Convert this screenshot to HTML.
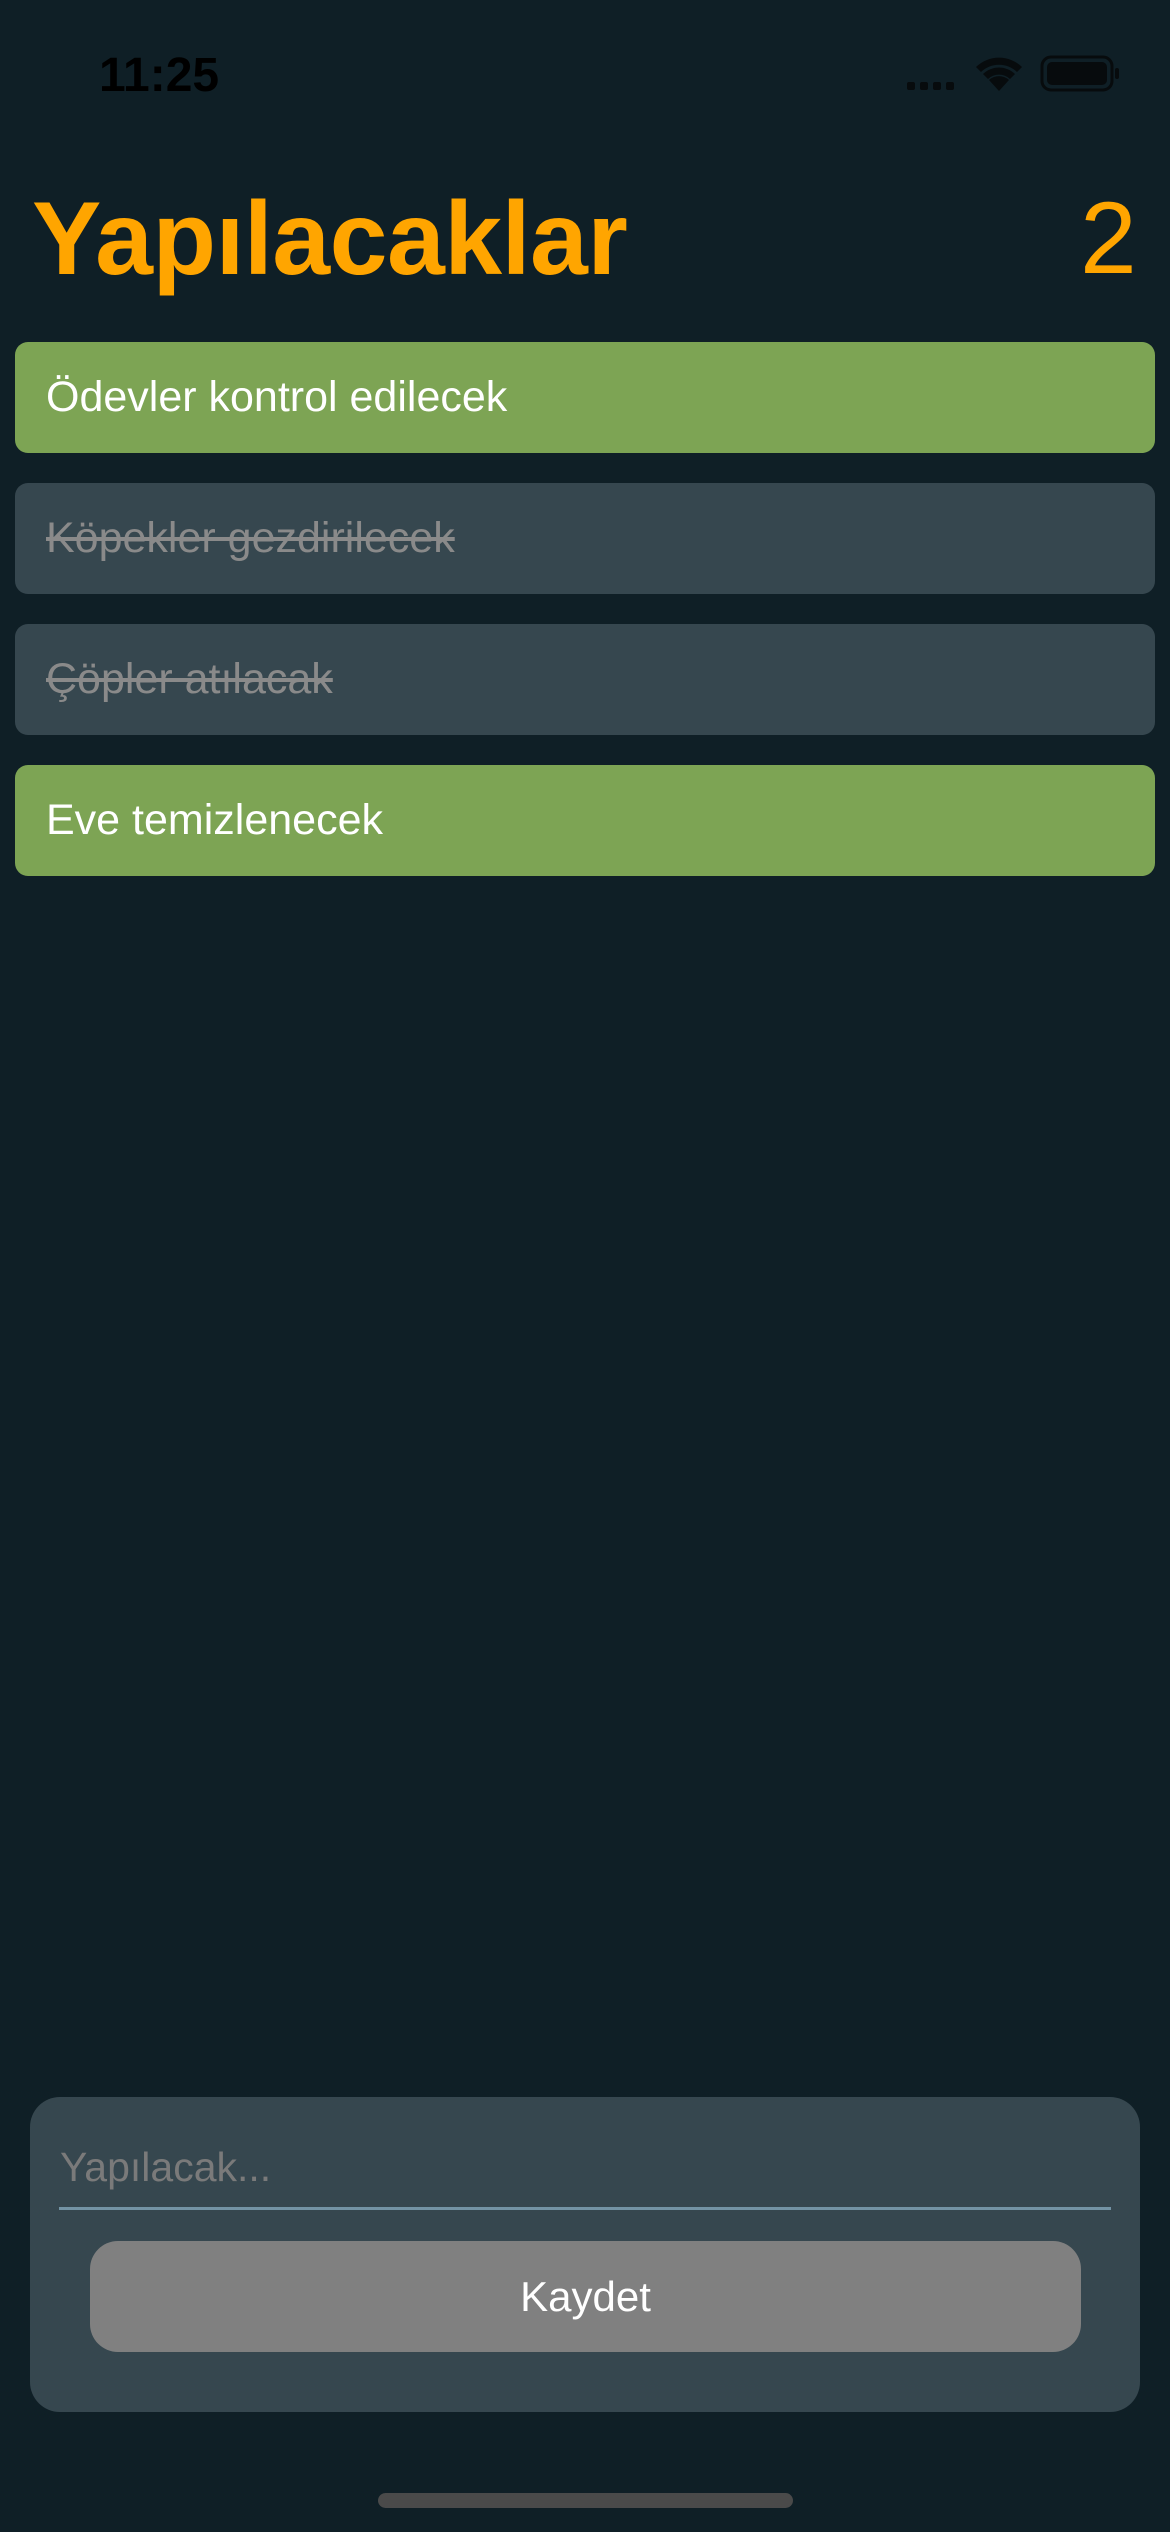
<!DOCTYPE html>
<html><head><meta charset="utf-8"><style>
body{margin:0;width:1170px;height:2532px;background:#0f1f26;position:relative;overflow:hidden;font-family:"Liberation Sans",sans-serif}
.a{position:absolute}
.card{position:absolute;left:15px;width:1140px;height:111px;border-radius:13px;box-sizing:border-box;padding-left:31px;line-height:111px;font-size:43px;color:#fff}
.g{background:#7da454}
.d{background:#36474f;color:#8a8a8a;text-decoration:line-through}
</style></head><body>
<div class="a" style="left:99px;top:48px;font-size:48px;font-weight:bold;color:#000;letter-spacing:0px">11:25</div>
<svg class="a" style="left:905px;top:54px" width="215" height="40" viewBox="0 0 215 40">
<g fill="#070b0d"><rect x="2" y="28" width="8" height="8" rx="2"/><rect x="15" y="28" width="8" height="8" rx="2"/><rect x="28" y="28" width="8" height="8" rx="2"/><rect x="41" y="28" width="8" height="8" rx="2"/>
<path d="M94 37 L84 26 A15 15 0 0 1 104 26 Z"/>
<path d="M78 20 A23 23 0 0 1 110 20 L105 25 A16 16 0 0 0 83 25 Z"/>
<path d="M71 13 A33 33 0 0 1 117 13 L112 18 A26 26 0 0 0 76 18 Z"/>
<rect x="137" y="3" width="70" height="33" rx="9" fill="none" stroke="#070b0d" stroke-width="3"/>
<rect x="142" y="8" width="60" height="23" rx="5"/><rect x="210" y="14" width="4" height="11" rx="2"/></g></svg>
<div class="a" style="left:32px;top:180px;font-size:104px;font-weight:bold;color:#ffa500;letter-spacing:-0.5px">Yapılacaklar</div>
<div class="a" style="left:1080px;top:180px;font-size:102px;color:#ffa500">2</div>
<div class="card g" style="top:342px">Ödevler kontrol edilecek</div>
<div class="card d" style="top:483px">Köpekler gezdirilecek</div>
<div class="card d" style="top:624px">Çöpler atılacak</div>
<div class="card g" style="top:765px">Eve temizlenecek</div>
<div class="a" style="left:30px;top:2097px;width:1110px;height:315px;background:#36474f;border-radius:30px"></div>
<div class="a" style="left:60px;top:2144px;font-size:41px;color:#7a7a7a">Yapılacak...</div>
<div class="a" style="left:59px;top:2207px;width:1052px;height:3px;background:#7393a4"></div>
<div class="a" style="left:90px;top:2241px;width:991px;height:111px;background:#808080;border-radius:28px;color:#fff;font-size:42px;text-align:center;line-height:111px">Kaydet</div>
<div class="a" style="left:378px;top:2493px;width:415px;height:15px;background:#4a4a4a;border-radius:8px"></div>
</body></html>
